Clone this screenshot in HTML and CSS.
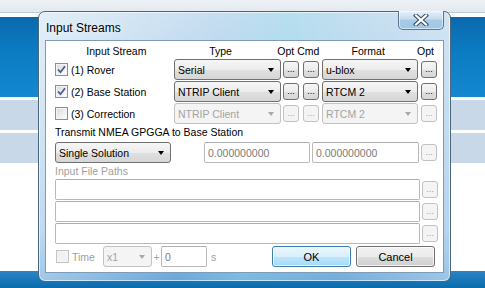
FILE: index.html
```html
<!DOCTYPE html>
<html>
<head>
<meta charset="utf-8">
<link rel="stylesheet" href="styles.css">
</head>
<body>
<div class="desk">
  <div class="topstrip"></div>
  <div class="gap5"></div>
  <div class="blueband"></div>
  <div class="gap3"></div>
  <div class="band"></div>
  <div class="gap3"></div>
  <div class="band"></div>
  <div class="fill"></div>
  <div class="bottomband"></div>
</div>

<div class="dialog">
  <div class="titlebar">
    <span class="title">Input Streams</span>
    <div class="close">
      <svg width="16" height="12" viewBox="0 0 16 12"><path d="M3 1.5 L13 10.5 M13 1.5 L3 10.5" stroke="#3b4a5c" stroke-width="4.2" stroke-linecap="square"/><path d="M3 1.5 L13 10.5 M13 1.5 L3 10.5" stroke="#ffffff" stroke-width="2.2" stroke-linecap="square"/></svg>
    </div>
  </div>
  <div class="client">
    <div class="hdr">
      <div class="hA">Input Stream</div>
      <div class="hB">Type</div>
      <div class="hC">Opt Cmd</div>
      <div class="hD">Format</div>
      <div class="hS"></div>
      <div class="hE">Opt</div>
    </div>

    <div class="row">
      <div class="lab"><span class="chk on"><svg width="11" height="11" viewBox="0 0 11 11"><path d="M2 5.5 L4.5 8.2 L9 2.2" fill="none" stroke="#4a5e8c" stroke-width="1.8"/></svg></span><span>(1) Rover</span></div>
      <div class="combo cType">Serial</div>
      <div class="btn b1">...</div>
      <div class="btn b2">...</div>
      <div class="combo cFmt">u-blox</div>
      <div class="btn b3">...</div>
    </div>
    <div class="row">
      <div class="lab"><span class="chk on"><svg width="11" height="11" viewBox="0 0 11 11"><path d="M2 5.5 L4.5 8.2 L9 2.2" fill="none" stroke="#4a5e8c" stroke-width="1.8"/></svg></span><span>(2) Base Station</span></div>
      <div class="combo cType">NTRIP Client</div>
      <div class="btn b1">...</div>
      <div class="btn b2">...</div>
      <div class="combo cFmt">RTCM 2</div>
      <div class="btn b3">...</div>
    </div>
    <div class="row">
      <div class="lab"><span class="chk"></span><span>(3) Correction</span></div>
      <div class="combo cType dis">NTRIP Client</div>
      <div class="btn b1 dis">...</div>
      <div class="btn b2 dis">...</div>
      <div class="combo cFmt dis">RTCM 2</div>
      <div class="btn b3 dis">...</div>
    </div>

    <div class="caption">Transmit NMEA GPGGA to Base Station</div>
    <div class="row">
      <div class="combo cSol">Single Solution</div>
      <div class="field fPos1">0.000000000</div>
      <div class="field fPos2">0.000000000</div>
      <div class="btn b4 dis">...</div>
    </div>

    <div class="caption gray">Input File Paths</div>
    <div class="row">
      <div class="field fPath"></div>
      <div class="btn b4 dis">...</div>
    </div>
    <div class="row">
      <div class="field fPath"></div>
      <div class="btn b4 dis">...</div>
    </div>
    <div class="row">
      <div class="field fPath"></div>
      <div class="btn b4 dis">...</div>
    </div>

    <div class="row last">
      <span class="chk dchk"></span><span class="gray tlab">Time</span>
      <div class="combo cX dis">x1</div>
      <span class="gray plus">+</span>
      <div class="field fT">0</div>
      <span class="gray slab">s</span>
      <div class="pbtn ok">OK</div>
      <div class="pbtn cancel">Cancel</div>
    </div>
  </div>
</div>
</body>
</html>
```

FILE: styles.css
```css
html, body {
  margin: 0;
  padding: 0;
}
body {
  width: 485px;
  height: 288px;
  overflow: hidden;
  position: relative;
  font-family: "Liberation Sans", Arial, sans-serif;
  font-size: 10.5px;
  color: #000;
  background: #fff;
}
.desk {
  display: flex;
  flex-direction: column;
  height: 288px;
}
.topstrip {
  height: 12px;
  background: linear-gradient(#eef2f6, #e2e9f0);
  border-bottom: 1px solid #b9cadb;
}
.gap5 { height: 4px; background: #fff; }
.gap3 { height: 3px; background: #fff; }
.blueband {
  height: 80px;
  background: linear-gradient(#0a69ad 0%, #0c7cc3 45%, #1388d0 100%);
}
.band {
  height: 30px;
  background: #c8d8e8;
}
.fill { flex: 1; background: #fff; }
.bottomband {
  height: 17px;
  background: linear-gradient(#2a86c6, #0a6aab);
}

/* dialog */
.dialog {
  position: absolute;
  left: 38px;
  top: 11px;
  width: 413px;
  height: 271px;
  box-sizing: border-box;
  border: 1px solid #4a6580;
  border-radius: 7px;
  background:
    linear-gradient(100deg, rgba(255,255,255,0.55) 0%, rgba(255,255,255,0.1) 40%, rgba(170,230,240,0.4) 55%, rgba(255,255,255,0.15) 75%, rgba(255,255,255,0.4) 100%),
    linear-gradient(#c0daef 0%, #a6cae8 40%, #8cbbe3 80%, #589ed6 100%);
  box-shadow: inset 0 0 0 1px rgba(255,255,255,0.6);
}
.titlebar {
  height: 28px;
  display: flex;
  align-items: flex-start;
}
.title {
  font-size: 12px;
  margin: 9px 0 0 7px;
  color: #000;
  text-shadow: 0 0 6px rgba(255,255,255,0.9);
}
.close {
  margin-left: auto;
  margin-right: 6px;
  margin-top: -1px;
  width: 46px;
  height: 19px;
  box-sizing: border-box;
  border: 1px solid #5a7592;
  border-top: none;
  border-radius: 0 0 5px 5px;
  background: linear-gradient(#e6f0f8 0%, #c6dcee 45%, #a8cbe7 50%, #9cc6e6 100%);
  box-shadow: inset 0 0 0 1px rgba(255,255,255,0.55);
  display: flex;
  align-items: center;
  justify-content: center;
}
.client {
  margin: 0 0 0 6px;
  width: 399px;
  height: 233px;
  box-sizing: border-box;
  border: 1px solid #7e9bb8;
  background: #fff;
  padding: 0 0 0 9px;
}

/* header */
.hdr {
  display: flex;
  height: 12px;
  margin-top: 4px;
  margin-bottom: 2px;
  line-height: 12px;
}
.hA { width: 123px; text-align: center; }
.hB { width: 86px; text-align: center; }
.hC { width: 70px; text-align: center; }
.hD { width: 70px; text-align: center; }
.hS { width: 5px; }
.hE { width: 35px; text-align: center; }

.row {
  display: flex;
  align-items: center;
  height: 21px;
  margin-bottom: 1px;
}
.lab {
  width: 119px;
  display: flex;
  align-items: center;
}
.lab span:last-child { margin-left: 3px; }

.chk {
  width: 11px;
  height: 11px;
  border: 1px solid #8e8f8f;
  background: linear-gradient(135deg, #d8d8d8 0%, #f4f4f4 70%, #ffffff 100%);
  box-shadow: inset 0 0 0 1px #f4f4f4;
  display: inline-flex;
  align-items: center;
  justify-content: center;
  flex: none;
}
.dchk {
  border-color: #c5c5c5;
  background: #f2f2f2;
  margin-left: 1px;
}

.combo {
  box-sizing: border-box;
  height: 21px;
  border: 1px solid #707070;
  border-radius: 3px;
  background: linear-gradient(#f6f6f6 0%, #ececec 50%, #e0e0e0 52%, #d6d6d6 100%);
  display: flex;
  align-items: center;
  padding-left: 3px;
  flex: none;
}
.combo::after {
  content: "";
  margin-left: auto;
  margin-right: 6px;
  border-left: 3.5px solid transparent;
  border-right: 3.5px solid transparent;
  border-top: 4px solid #000;
}
.combo.dis {
  border-color: #c2c2c2;
  background: #f4f4f4;
  color: #a3a3a3;
}
.combo.dis::after { border-top-color: #a8a8a8; }

.cType { width: 107px; }
.cFmt { width: 96px; margin-left: 3px; }
.cSol { width: 116px; }
.cX { width: 49px; margin-left: 8px; background: #fff; }

.btn {
  box-sizing: border-box;
  width: 16px;
  height: 17px;
  border: 1px solid #707070;
  border-radius: 3px;
  background: linear-gradient(#f6f6f6 0%, #ececec 50%, #e0e0e0 52%, #d6d6d6 100%);
  font-size: 9px;
  line-height: 14px;
  text-align: center;
  letter-spacing: 0;
  flex: none;
}
.btn.dis {
  border-color: #c2c2c2;
  background: #f4f4f4;
  color: #a0a0a0;
}
.b1 { margin-left: 2px; }
.b2 { margin-left: 4px; }
.b3 { margin-left: 3px; }
.b4 { margin-left: 2px; }

.field {
  box-sizing: border-box;
  height: 21px;
  border: 1px solid #b9b9b9;
  border-top-color: #abadb3;
  border-radius: 2px;
  background: #fff;
  color: #7a7a7a;
  display: flex;
  align-items: center;
  padding-left: 3px;
  flex: none;
}
.fPos1 { width: 106px; margin-left: 33px; }
.fPos2 { width: 107px; margin-left: 2px; }
.fPath { width: 365px; }
.fT { width: 46px; }

.caption {
  height: 15px;
  line-height: 15px;
  margin-bottom: 2px;
}
.caption.gray { margin-top: 1px; margin-bottom: 0; }
.gray { color: #a0a0a0; }

.row.last {
  margin-top: 2px;
}
.tlab { margin-left: 3px; }
.plus { width: 9px; text-align: center; }
.slab { margin-left: 4px; }

.pbtn {
  box-sizing: border-box;
  width: 79px;
  height: 21px;
  border-radius: 3px;
  display: flex;
  align-items: center;
  justify-content: center;
  font-size: 11px;
  flex: none;
}
.ok {
  margin-left: auto;
  border: 1px solid #3c7fb1;
  background: linear-gradient(#eaf6fd 0%, #d9f0fc 50%, #bee6fd 52%, #a7d9f5 100%);
  box-shadow: inset 0 0 0 1px rgba(255,255,255,0.7);
}
.cancel {
  margin-left: 5px;
  margin-right: 8px;
  border: 1px solid #707070;
  background: linear-gradient(#f2f2f2 0%, #ebebeb 50%, #dddddd 52%, #cfcfcf 100%);
  box-shadow: inset 0 0 0 1px rgba(255,255,255,0.7);
}
```
